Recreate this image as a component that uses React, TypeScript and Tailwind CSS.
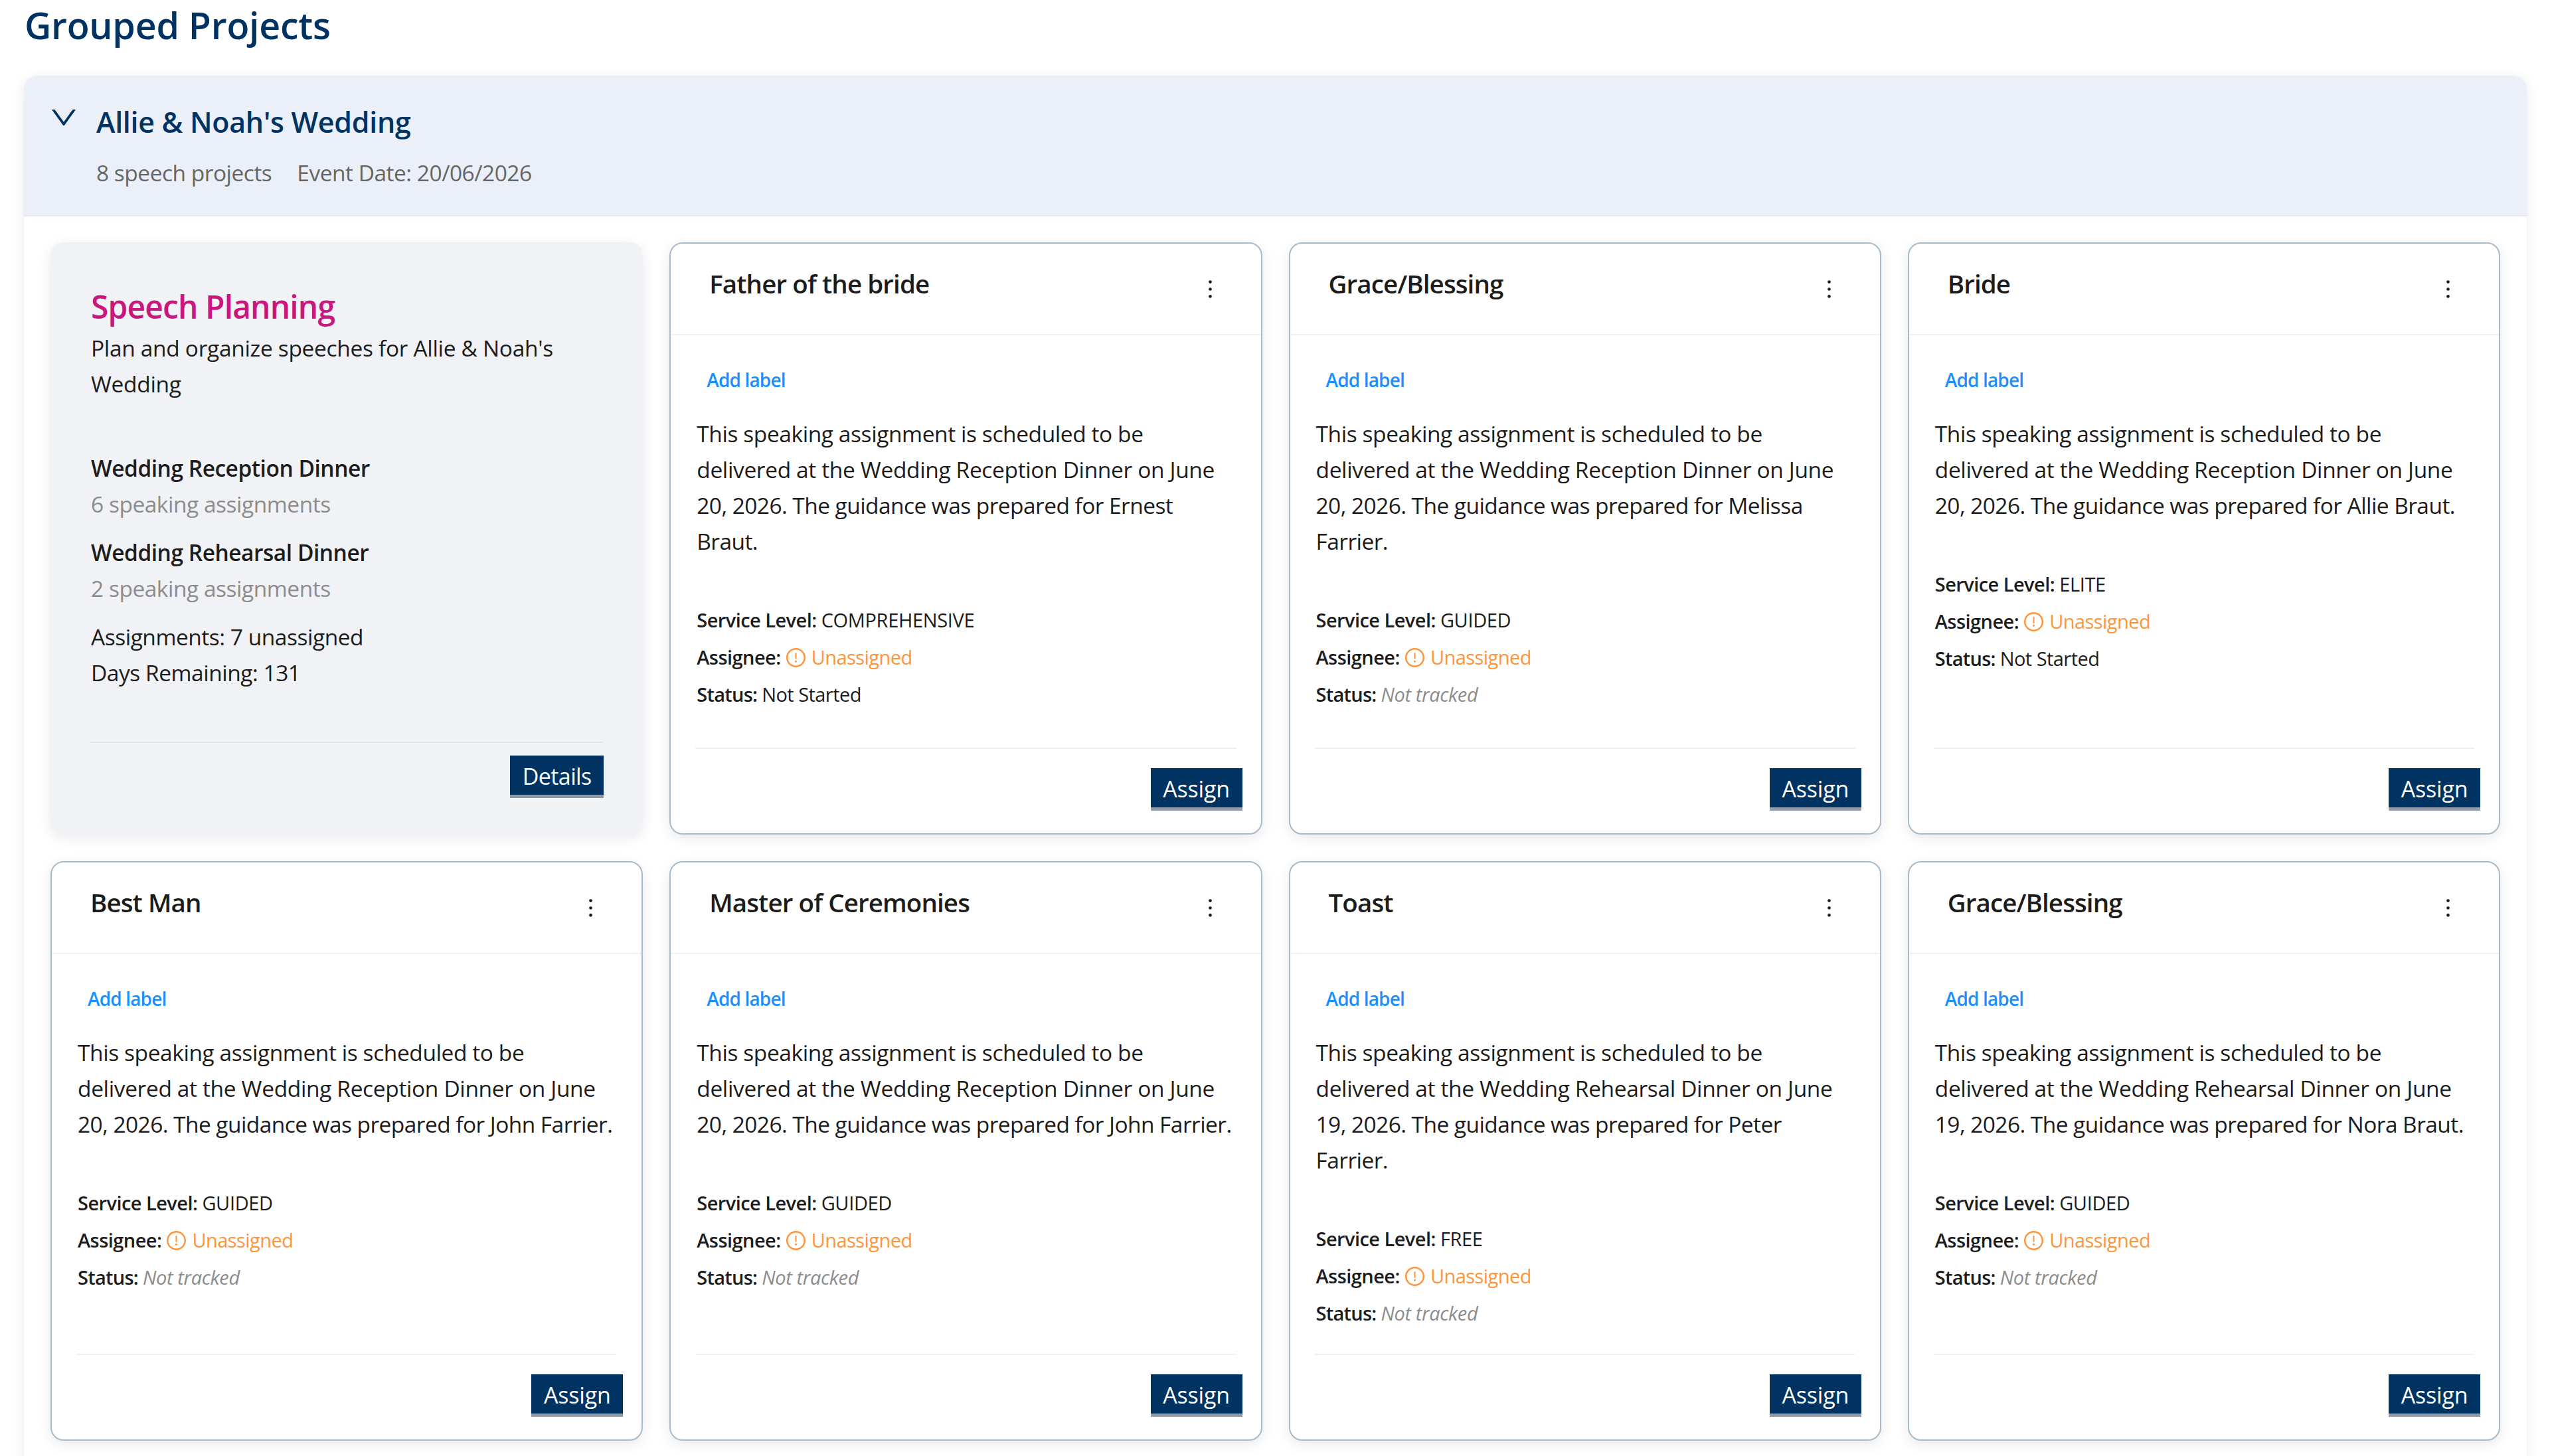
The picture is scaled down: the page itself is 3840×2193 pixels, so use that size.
import React from 'react';

type Status = 'Not Started' | 'Not tracked';

interface Project {
  id: number;
  role: string;
  event: string;
  // Description lines after the shared intro
  lines: string[];
  serviceLevel: string;
  status: Status;
}

interface PlannedEvent {
  name: string;
  assignments: string;
}

const projects: Project[] = [
  {
    id: 1,
    role: 'Father of the bride',
    event: 'Wedding Reception Dinner',
    lines: ['20, 2026. The guidance was prepared for Ernest', 'Braut.'],
    serviceLevel: 'COMPREHENSIVE',
    status: 'Not Started',
  },
  {
    id: 2,
    role: 'Grace/Blessing',
    event: 'Wedding Reception Dinner',
    lines: ['20, 2026. The guidance was prepared for Melissa', 'Farrier.'],
    serviceLevel: 'GUIDED',
    status: 'Not tracked',
  },
  {
    id: 3,
    role: 'Bride',
    event: 'Wedding Reception Dinner',
    lines: ['20, 2026. The guidance was prepared for Allie Braut.'],
    serviceLevel: 'ELITE',
    status: 'Not Started',
  },
  {
    id: 4,
    role: 'Best Man',
    event: 'Wedding Reception Dinner',
    lines: ['20, 2026. The guidance was prepared for John Farrier.'],
    serviceLevel: 'GUIDED',
    status: 'Not tracked',
  },
  {
    id: 5,
    role: 'Master of Ceremonies',
    event: 'Wedding Reception Dinner',
    lines: ['20, 2026. The guidance was prepared for John Farrier.'],
    serviceLevel: 'GUIDED',
    status: 'Not tracked',
  },
  {
    id: 6,
    role: 'Toast',
    event: 'Wedding Rehearsal Dinner',
    lines: ['19, 2026. The guidance was prepared for Peter', 'Farrier.'],
    serviceLevel: 'FREE',
    status: 'Not tracked',
  },
  {
    id: 7,
    role: 'Grace/Blessing',
    event: 'Wedding Rehearsal Dinner',
    lines: ['19, 2026. The guidance was prepared for Nora Braut.'],
    serviceLevel: 'GUIDED',
    status: 'Not tracked',
  },
];

const events: PlannedEvent[] = [
  { name: 'Wedding Reception Dinner', assignments: '6 speaking assignments' },
  { name: 'Wedding Rehearsal Dinner', assignments: '2 speaking assignments' },
];

const DownIcon: React.FC<{ className?: string }> = ({ className }) => (
  <svg viewBox="64 64 896 896" fill="currentColor" className={className}>
    <path d="M884 256h-75c-5.1 0-9.9 2.5-12.9 6.6L512 654.2 227.9 262.6c-3-4.1-7.8-6.6-12.9-6.6h-75c-6.5 0-10.3 7.4-6.5 12.7l352.6 486.1c12.8 17.6 39 17.6 51.7 0l352.6-486.1c3.9-5.3.1-12.7-6.4-12.7z" />
  </svg>
);

const MoreIcon: React.FC<{ className?: string }> = ({ className }) => (
  <svg viewBox="64 64 896 896" fill="currentColor" className={className}>
    <circle cx="512" cy="232" r="60" />
    <circle cx="512" cy="512" r="60" />
    <circle cx="512" cy="792" r="60" />
  </svg>
);

const WarningIcon: React.FC<{ className?: string }> = ({ className }) => (
  <svg viewBox="64 64 896 896" fill="currentColor" className={className}>
    <path d="M512 64C264.6 64 64 264.6 64 512s200.6 448 448 448 448-200.6 448-448S759.4 64 512 64zm0 820c-205.4 0-372-166.6-372-372s166.6-372 372-372 372 166.6 372 372-166.6 372-372 372z" />
    <path d="M464 688a48 48 0 1 0 96 0 48 48 0 1 0-96 0zm24-112h48c4.4 0 8-3.6 8-8V296c0-4.4-3.6-8-8-8h-48c-4.4 0-8 3.6-8 8v272c0 4.4 3.6 8 8 8z" />
  </svg>
);

const Button: React.FC<{ label: string; className: string }> = ({ label, className }) => (
  <button
    type="button"
    className={`h-16 bg-[#003262] border-b-[5px] border-[#8f9ba6] text-white text-[34px] leading-[62px] text-center whitespace-nowrap ${className}`}
  >
    {label}
  </button>
);

const PlanningCard: React.FC = () => (
  <div className="flex flex-col rounded-[20px] bg-[#f0f2f5] pl-[60px] pr-[59px] pt-[62px] pb-[55px] shadow-[0_5px_20px_rgba(0,0,0,0.09)]">
    <h3 className="pl-px text-[48px] leading-[70px] font-semibold tracking-[-0.9px] text-[#c9177e]">Speech Planning</h3>
    <p className="pl-px text-[33.5px] leading-[54px] tracking-[-0.33px] whitespace-pre-line">
      {"Plan and organize speeches for Allie & Noah's\nWedding"}
    </p>

    <div className="mt-[73px] flex flex-col gap-[19px] pl-px text-[33.5px] leading-[54px] tracking-[-0.48px]">
      {events.map((event) => (
        <div key={event.name}>
          <p className="font-semibold">{event.name}</p>
          <p className="text-[#8c8c8c]">{event.assignments}</p>
        </div>
      ))}
      <div>
        <p>Assignments: 7 unassigned</p>
        <p>Days Remaining: 131</p>
      </div>
    </div>

    <div className="mt-auto flex justify-end border-t-2 border-[#e4e6e9] pt-[19px]">
      <Button label="Details" className="w-[141px] tracking-[-0.6px]" />
    </div>
  </div>
);

const ProjectCard: React.FC<{ project: Project }> = ({ project }) => (
  <div className="flex flex-col rounded-[20px] border-2 border-[#a9bacb] bg-white shadow-[0_5px_20px_rgba(0,0,0,0.09)]">
    <div className="flex h-[138px] items-start justify-between border-b-2 border-[#f0f0f0] pl-[58px] pr-[59px] pt-[33px]">
      <h4 className="text-[38.5px] leading-[54px] font-semibold tracking-[-0.9px]">{project.role}</h4>
      <MoreIcon className="mt-[18px] size-[35px]" />
    </div>

    <div className="flex flex-1 flex-col pl-[39px] pt-[47px]">
      <a className="pl-[15px] text-[28px] leading-[40px] font-semibold tracking-[-0.85px] text-[#1890ff]">Add label</a>
      <div className="mt-[34px] text-[33.5px] leading-[54px] tracking-[-0.36px] whitespace-nowrap">
        <p className="tracking-[-0.42px]">This speaking assignment is scheduled to be</p>
        <p>delivered at the {project.event} on June</p>
        {project.lines.map((line) => (
          <p key={line} className="tracking-[-0.57px]">{line}</p>
        ))}
      </div>

      <div className="mt-[64px] text-[29px] leading-[56px] tracking-[-0.55px]">
        <p>
          <span className="font-semibold">Service Level:</span>{' '}
          <span className="tracking-[-0.35px]">{project.serviceLevel}</span>
        </p>
        <p className="flex items-center">
          <span className="font-semibold">Assignee:</span>
          <span className="ml-2 flex items-center gap-[9px] text-[#ff943d]">
            <WarningIcon className="size-[29px]" />
            Unassigned
          </span>
        </p>
        <p>
          <span className="font-semibold tracking-[-0.75px]">Status:</span>{' '}
          {project.status === 'Not tracked' ? (
            <em className="tracking-[-0.35px] text-[#8c8c8c]">{project.status}</em>
          ) : (
            <span>{project.status}</span>
          )}
        </p>
      </div>
    </div>

    <div className="mx-[37px] border-t-2 border-[#f0f0f0]" />
    <div className="flex justify-end pt-[29px] pr-[28px] pb-[34px]">
      <Button label="Assign" className="w-[138px] tracking-[-0.2px]" />
    </div>
  </div>
);

export default function App() {
  return (
    <div className="h-[2193px] overflow-hidden bg-white pt-1.5 pl-9 pr-[35px] font-['Open_Sans','Noto_Sans',sans-serif] text-[#1c1c1c]">
      <h1 className="pl-px text-[55.5px] leading-[64px] font-semibold tracking-[-0.25px] text-[#003262]">Grouped Projects</h1>

      <section className="mt-[44px] rounded-[20px] bg-white shadow-[0_5px_20px_rgba(0,0,0,0.09)]">
        <header className="flex items-start rounded-t-[20px] border-b-2 border-[#e6e8ec] bg-[#eaeff8] pt-[37px] pb-[37px] pl-[39px]">
          <DownIcon className="mt-[5px] size-[42px] text-[#003262]" />
          <div className="ml-[28px]">
            <h2 className="pt-px text-[43px] leading-[64px] font-semibold tracking-[-0.3px] text-[#003262]">
              Allie &amp; Noah's Wedding
            </h2>
            <div className="mt-[17px] flex gap-[38px] text-[33.5px] leading-[54px] tracking-[-0.5px] text-[#666666]">
              <span>8 speech projects</span>
              <span>Event Date: 20/06/2026</span>
            </div>
          </div>
        </header>

        <div className="grid grid-cols-4 grid-rows-[892px_873px] gap-10 px-10 pt-[39px] pb-20">
          <PlanningCard />
          {projects.map((project) => (
            <ProjectCard key={project.id} project={project} />
          ))}
        </div>
      </section>
    </div>
  );
}
